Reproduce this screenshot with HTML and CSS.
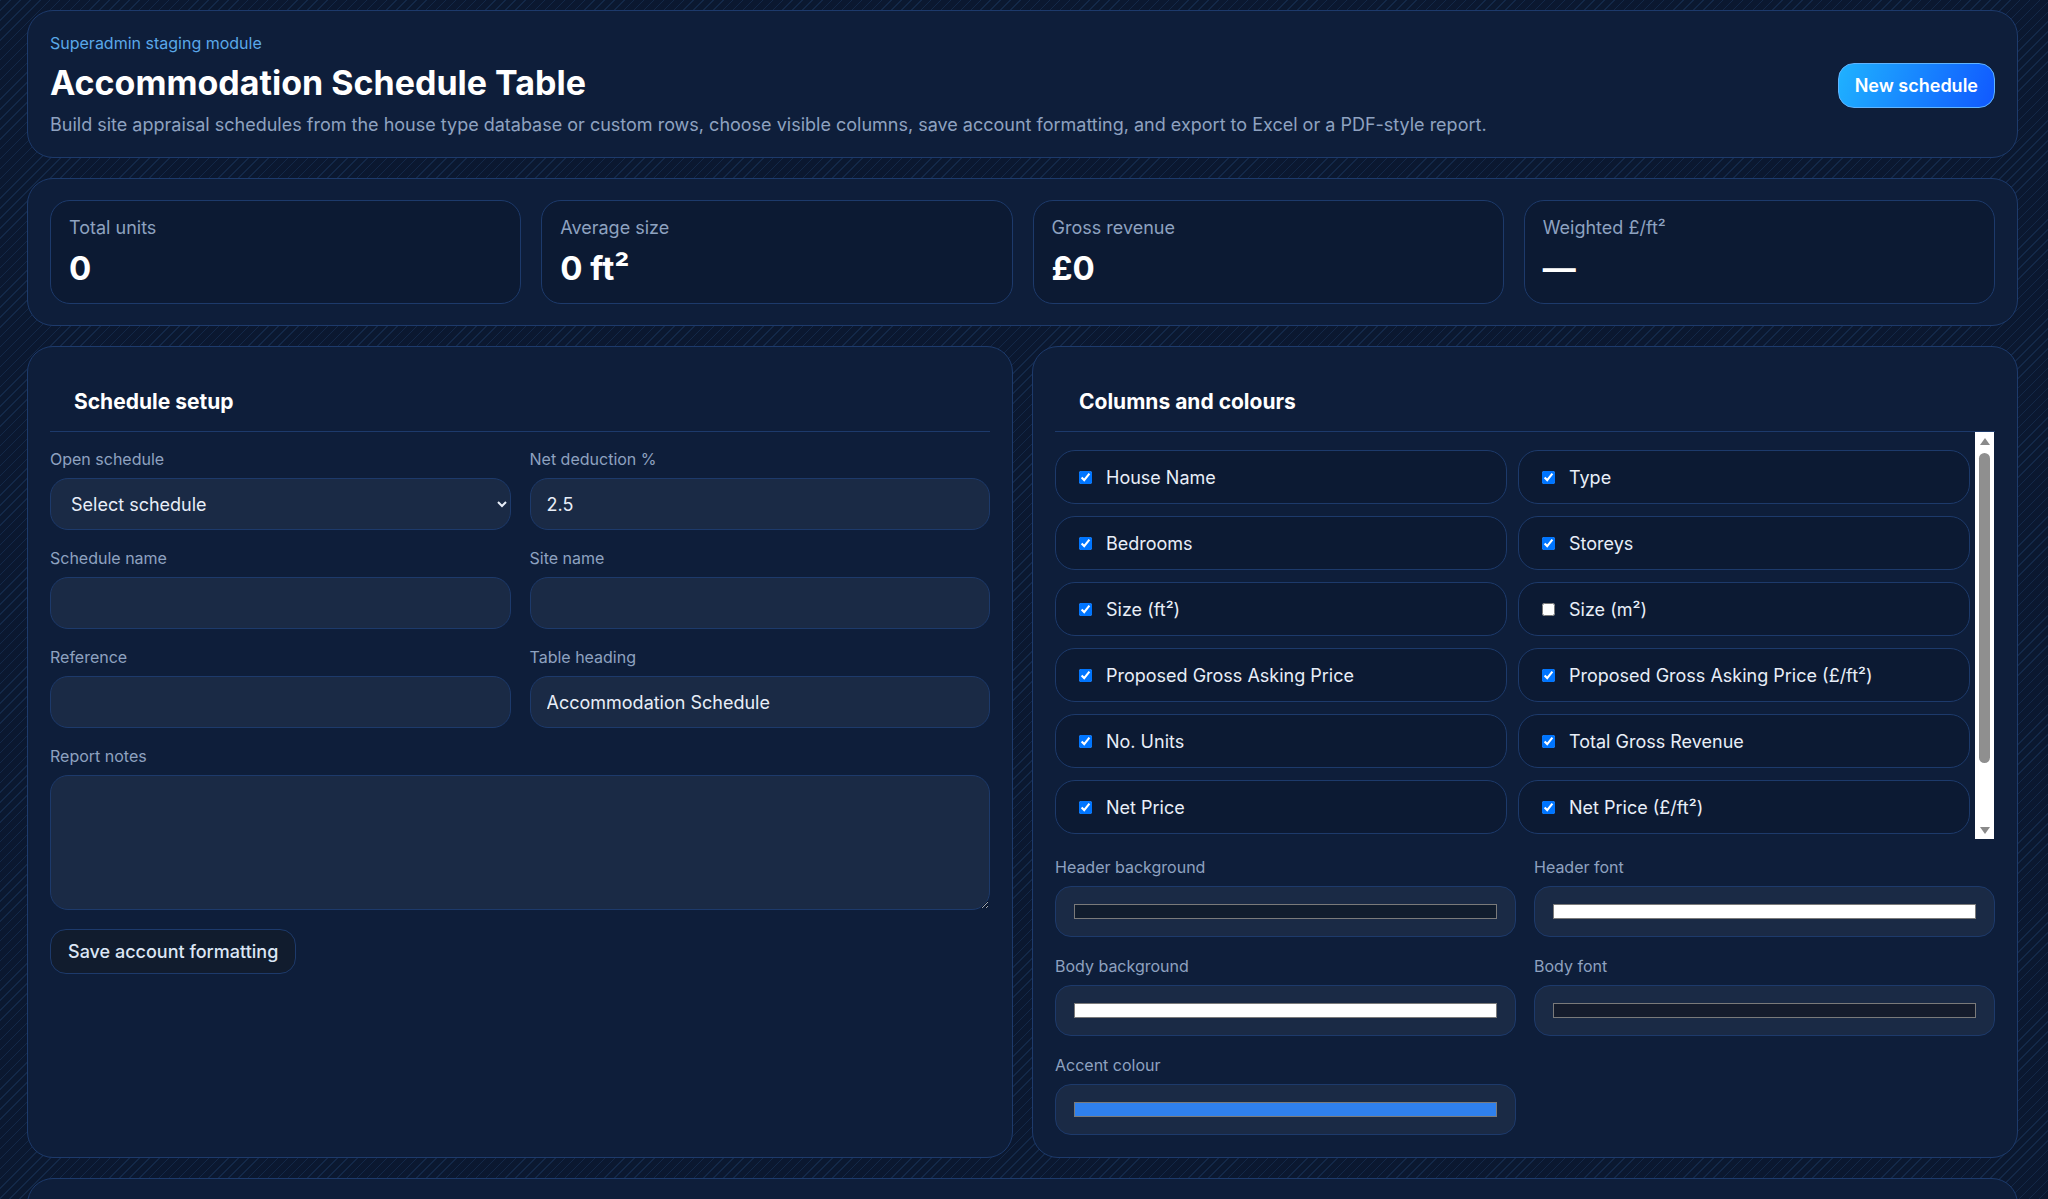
FILE: index.html
```html
<!DOCTYPE html>
<html lang="en">
<head>
    <meta charset="UTF-8">
    <meta name="viewport" content="width=device-width, initial-scale=1.0">
    <title>Accommodation Schedule Table</title>
    <link rel="stylesheet" href="styles.css">
</head>
<body>
    <div class="page">
        <header class="card hero">
            <div class="hero-text">
                <div class="eyebrow">Superadmin staging module</div>
                <h1>Accommodation Schedule Table</h1>
                <p>Build site appraisal schedules from the house type database or custom rows, choose visible columns, save account formatting, and export to Excel or a PDF-style report.</p>
            </div>
            <button class="btn-primary" type="button">New schedule</button>
        </header>

        <section class="card stats">
            <div class="stat">
                <div class="stat-label">Total units</div>
                <div class="stat-value">0</div>
            </div>
            <div class="stat">
                <div class="stat-label">Average size</div>
                <div class="stat-value">0 ft²</div>
            </div>
            <div class="stat">
                <div class="stat-label">Gross revenue</div>
                <div class="stat-value">£0</div>
            </div>
            <div class="stat">
                <div class="stat-label">Weighted £/ft²</div>
                <div class="stat-value">—</div>
            </div>
        </section>

        <div class="panels">
            <section class="card panel">
                <h2 class="panel-title">Schedule setup</h2>
                <div class="form-grid">
                    <div class="field">
                        <label for="openSchedule">Open schedule</label>
                        <select id="openSchedule">
                            <option>Select schedule</option>
                        </select>
                    </div>
                    <div class="field">
                        <label for="netDeduction">Net deduction %</label>
                        <input type="text" id="netDeduction" value="2.5">
                    </div>
                    <div class="field">
                        <label for="scheduleName">Schedule name</label>
                        <input type="text" id="scheduleName">
                    </div>
                    <div class="field">
                        <label for="siteName">Site name</label>
                        <input type="text" id="siteName">
                    </div>
                    <div class="field">
                        <label for="reference">Reference</label>
                        <input type="text" id="reference">
                    </div>
                    <div class="field">
                        <label for="tableHeading">Table heading</label>
                        <input type="text" id="tableHeading" value="Accommodation Schedule">
                    </div>
                    <div class="field wide">
                        <label for="reportNotes">Report notes</label>
                        <textarea id="reportNotes"></textarea>
                    </div>
                </div>
                <button class="btn-secondary" type="button">Save account formatting</button>
            </section>

            <section class="card panel">
                <h2 class="panel-title">Columns and colours</h2>
                <div class="column-box">
                    <div class="column-scroll">
                        <div class="column-grid">
                            <label class="column-item"><input type="checkbox" checked> House Name</label>
                            <label class="column-item"><input type="checkbox" checked> Type</label>
                            <label class="column-item"><input type="checkbox" checked> Bedrooms</label>
                            <label class="column-item"><input type="checkbox" checked> Storeys</label>
                            <label class="column-item"><input type="checkbox" checked> Size (ft²)</label>
                            <label class="column-item"><input type="checkbox"> Size (m²)</label>
                            <label class="column-item"><input type="checkbox" checked> Proposed Gross Asking Price</label>
                            <label class="column-item"><input type="checkbox" checked> Proposed Gross Asking Price (£/ft²)</label>
                            <label class="column-item"><input type="checkbox" checked> No. Units</label>
                            <label class="column-item"><input type="checkbox" checked> Total Gross Revenue</label>
                            <label class="column-item"><input type="checkbox" checked> Net Price</label>
                            <label class="column-item"><input type="checkbox" checked> Net Price (£/ft²)</label>
                        </div>
                    </div>
                    <div class="scroll-rail" aria-hidden="true">
                        <span class="rail-arrow up"></span>
                        <span class="rail-track"><span class="rail-thumb"></span></span>
                        <span class="rail-arrow down"></span>
                    </div>
                </div>
                <div class="colour-grid">
                    <div class="field">
                        <label for="headerBg">Header background</label>
                        <input type="color" id="headerBg" value="#111d2e">
                    </div>
                    <div class="field">
                        <label for="headerFont">Header font</label>
                        <input type="color" id="headerFont" value="#ffffff">
                    </div>
                    <div class="field">
                        <label for="bodyBg">Body background</label>
                        <input type="color" id="bodyBg" value="#ffffff">
                    </div>
                    <div class="field">
                        <label for="bodyFont">Body font</label>
                        <input type="color" id="bodyFont" value="#151c2c">
                    </div>
                    <div class="field">
                        <label for="accentColour">Accent colour</label>
                        <input type="color" id="accentColour" value="#2f80ed">
                    </div>
                </div>
            </section>
        </div>

        <section class="card panel schedule-table">
            <h2 class="panel-title">Schedule rows</h2>
        </section>
    </div>
</body>
</html>
```

FILE: styles.css
```css
:root {
    --page-bg: #0b1830;
    --stripe: #132848;
    --card-bg: #0e1e3a;
    --inner-bg: #0c1a33;
    --input-bg: #1a2a45;
    --border-color: #1d3a6b;
    --text-color: #e8eef8;
    --muted: #8ea2c0;
    --eyebrow: #5aa8e8;
}

* {
    box-sizing: border-box;
}

body {
    margin: 0;
    font-family: Inter, 'Noto Sans', sans-serif;
    color: var(--text-color);
    background-color: var(--page-bg);
    background-image: repeating-linear-gradient(135deg, var(--stripe) 0 1px, transparent 1px 7px);
}

.page {
    display: flex;
    flex-direction: column;
    gap: 20px;
    padding: 10px 30px 40px 27px;
}

.card {
    background-color: var(--card-bg);
    border: 1px solid var(--border-color);
    border-radius: 26px;
}

/* header */
.hero {
    display: flex;
    align-items: center;
    justify-content: space-between;
    padding: 21px 22px 19px;
}
.eyebrow {
    color: var(--eyebrow);
    font-size: 16px;
    line-height: 22px;
}
.hero h1 {
    margin: 9px 0 9px;
    font-size: 34px;
    line-height: 40px;
    font-weight: 700;
    color: #fff;
}
.hero p {
    margin: 0;
    font-size: 18px;
    line-height: 26px;
    color: var(--muted);
}
.btn-primary {
    height: 45px;
    padding: 0 16px;
    border: 1px solid #5fb4ff;
    border-radius: 16px;
    background: linear-gradient(110deg, #1fb2ff, #1058ff);
    color: #fff;
    font-family: inherit;
    font-size: 18px;
    font-weight: 600;
    cursor: pointer;
}

/* stats */
.stats {
    display: grid;
    grid-template-columns: repeat(4, 1fr);
    gap: 20px;
    padding: 21px 22px;
}
.stat {
    background-color: var(--inner-bg);
    border: 1px solid var(--border-color);
    border-radius: 20px;
    padding: 16px 18px;
}
.stat-label {
    font-size: 18px;
    line-height: 22px;
    color: var(--muted);
}
.stat-value {
    margin-top: 10px;
    font-size: 33px;
    line-height: 38px;
    font-weight: 700;
    color: #fff;
}

/* panels */
.panels {
    display: grid;
    grid-template-columns: 1fr 1fr;
    gap: 19px;
}
.panel {
    padding: 22px;
}
.panel-title {
    margin: 0;
    padding: 20px 24px 16px;
    border-bottom: 1px solid var(--border-color);
    font-size: 21px;
    line-height: 26px;
    font-weight: 700;
    color: #fff;
}

.form-grid,
.colour-grid {
    display: grid;
    grid-template-columns: 1fr 1fr;
    column-gap: 19px;
    row-gap: 18px;
}
.form-grid {
    padding-top: 17px;
}
.colour-grid {
    column-gap: 18px;
    row-gap: 19px;
    padding-top: 18px;
}
.field {
    display: flex;
    flex-direction: column;
    gap: 9px;
}
.field.wide {
    grid-column: span 2;
}
.field label {
    font-size: 16px;
    line-height: 20px;
    color: var(--muted);
}
.field input[type="text"],
.field select,
.field textarea {
    width: 100%;
    height: 52px;
    padding: 0 16px;
    border: 1px solid var(--border-color);
    border-radius: 18px;
    background-color: var(--input-bg);
    color: var(--text-color);
    font-family: inherit;
    font-size: 18px;
}
.field textarea {
    height: 135px;
    padding: 12px 16px;
    resize: vertical;
}
.field input[type="color"] {
    width: 100%;
    height: 51px;
    padding: 17px 18px;
    border: 1px solid var(--border-color);
    border-radius: 16px;
    background-color: var(--input-bg);
    cursor: pointer;
}
.field input[type="color"]::-webkit-color-swatch-wrapper {
    padding: 0;
}
.field input[type="color"]::-webkit-color-swatch {
    border: 1px solid #7a7a7a;
    border-radius: 0;
}

.btn-secondary {
    margin-top: 19px;
    height: 45px;
    padding: 0 17px;
    border: 1px solid var(--border-color);
    border-radius: 16px;
    background-color: #111c2e;
    color: #dce6f5;
    font-family: inherit;
    font-size: 18px;
    font-weight: 500;
    cursor: pointer;
}

/* column toggles */
.column-box {
    display: flex;
    height: 407px;
}
.column-scroll {
    flex: 1;
    overflow-y: auto;
    scrollbar-width: none;
}
.column-grid {
    display: grid;
    grid-template-columns: 1fr 1fr;
    column-gap: 11px;
    row-gap: 12px;
    padding: 18px 5px 18px 0;
}
.column-item {
    display: flex;
    align-items: center;
    gap: 14px;
    height: 54px;
    padding: 0 23px;
    border: 1px solid var(--border-color);
    border-radius: 20px;
    background-color: var(--inner-bg);
    font-size: 18px;
    color: var(--text-color);
    cursor: pointer;
}
.column-item input {
    width: 13px;
    height: 13px;
    margin: 0;
}

.scroll-rail {
    display: flex;
    flex-direction: column;
    width: 19px;
    margin-right: 1px;
    background-color: #fff;
}
.rail-arrow {
    height: 18px;
    display: flex;
    align-items: center;
    justify-content: center;
}
.rail-arrow::before {
    content: "";
    border-left: 5px solid transparent;
    border-right: 5px solid transparent;
}
.rail-arrow.up::before {
    border-bottom: 7px solid #8a8a8a;
}
.rail-arrow.down::before {
    border-top: 7px solid #8a8a8a;
}
.rail-track {
    flex: 1;
    padding: 3px 4px;
}
.rail-thumb {
    display: block;
    height: 85%;
    border-radius: 6px;
    background-color: #8f8f8f;
}

.schedule-table {
    min-height: 300px;
}
```
